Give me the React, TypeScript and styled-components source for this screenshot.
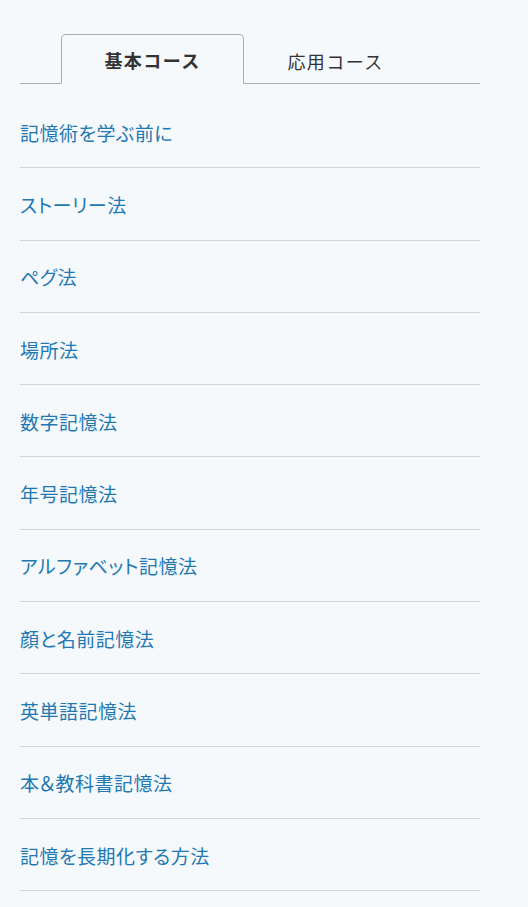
import React, { useState } from "react";
import styled, { createGlobalStyle } from "styled-components";

const Global = createGlobalStyle`
  html, body { margin: 0; padding: 0; background: #f5f9fc; }
  body { font-family: "Noto Sans CJK JP", "Noto Sans", sans-serif; }
`;

const Page = styled.div`
  padding: 34px 48px 0 20px;
  width: 460px;
`;

const TabBar = styled.div`
  display: flex;
  padding-left: 41px;
  border-bottom: 1px solid #a9adb1;
  height: 49px;
`;

const Tab = styled.button<{ $active?: boolean }>`
  width: 183px;
  height: 50px;
  box-sizing: border-box;
  margin-bottom: -1px;
  background: ${(p) => (p.$active ? "#f5f9fc" : "transparent")};
  border: 1px solid ${(p) => (p.$active ? "#a9adb1" : "transparent")};
  border-bottom: ${(p) => (p.$active ? "1px solid #f5f9fc" : "none")};
  border-radius: 5px 5px 0 0;
  font-family: "Noto Sans CJK JP", sans-serif;
  font-size: 18px;
  letter-spacing: 1.4px;
  font-weight: ${(p) => (p.$active ? 700 : 400)};
  color: #333;
  padding: 2px 0 0;
  cursor: pointer;
`;

const List = styled.ul`
  list-style: none;
  margin: 12px 0 0;
  padding: 0;
`;

const Item = styled.li`
  height: 72.3px;
  box-sizing: border-box;
  border-bottom: 1px solid #cfd4d8;
  display: flex;
  align-items: center;
  font-size: 19px;
  font-feature-settings: "palt";
  letter-spacing: 0.5px;
  color: #2278b2;
  padding-top: 1px;
`;

const items = [
  "記憶術を学ぶ前に",
  "ストーリー法",
  "ペグ法",
  "場所法",
  "数字記憶法",
  "年号記憶法",
  "アルファベット記憶法",
  "顔と名前記憶法",
  "英単語記憶法",
  "本＆教科書記憶法",
  "記憶を長期化する方法",
];

export default function App() {
  const [tab, setTab] = useState(0);
  return (
    <>
      <Global />
      <Page>
        <TabBar>
          <Tab $active={tab === 0} onClick={() => setTab(0)}>基本コース</Tab>
          <Tab $active={tab === 1} onClick={() => setTab(1)}>応用コース</Tab>
        </TabBar>
        <List>
          {items.map((t) => (
            <Item key={t}>{t}</Item>
          ))}
        </List>
      </Page>
    </>
  );
}
